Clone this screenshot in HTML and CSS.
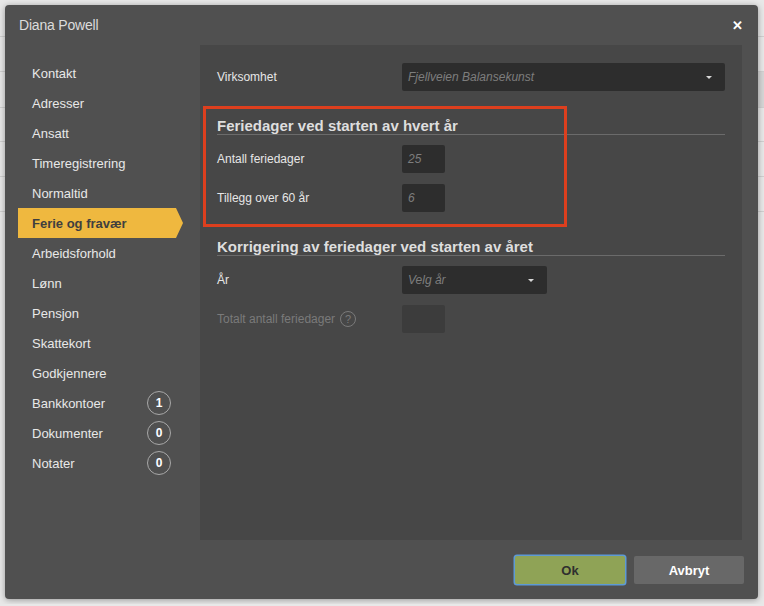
FILE: index.html
```html
<!DOCTYPE html>
<html lang="no">
<head>
  <meta charset="UTF-8" />
  <meta name="viewport" content="width=device-width, initial-scale=1.0"/>
  <title>Diana Powell</title>
  <link rel="stylesheet" href="styles.css">
</head>
<body>

  <div class="dialog">
    <div class="dialog-header">
      <span class="dialog-title">Diana Powell</span>
      <span class="close">&#10005;</span>
    </div>

    <div class="dialog-body">
      <ul class="menu">
        <li>Kontakt</li>
        <li>Adresser</li>
        <li>Ansatt</li>
        <li>Timeregistrering</li>
        <li>Normaltid</li>
        <li class="active">Ferie og fravær</li>
        <li>Arbeidsforhold</li>
        <li>Lønn</li>
        <li>Pensjon</li>
        <li>Skattekort</li>
        <li>Godkjennere</li>
        <li>Bankkontoer <span class="badge">1</span></li>
        <li>Dokumenter <span class="badge">0</span></li>
        <li>Notater <span class="badge">0</span></li>
      </ul>

      <div class="panel">
        <div class="row">
          <label>Virksomhet</label>
          <div class="select wide"><span>Fjellveien Balansekunst</span><i class="caret"></i></div>
        </div>

        <div class="section">
          <div class="highlight"></div>
          <h3>Feriedager ved starten av hvert år</h3>
          <div class="row">
            <label>Antall feriedager</label>
            <div class="field">25</div>
          </div>
          <div class="row">
            <label>Tillegg over 60 år</label>
            <div class="field">6</div>
          </div>
        </div>

        <div class="section">
          <h3>Korrigering av feriedager ved starten av året</h3>
          <div class="row">
            <label>År</label>
            <div class="select narrow"><span>Velg år</span><i class="caret"></i></div>
          </div>
          <div class="row disabled">
            <label>Totalt antall feriedager <span class="help">?</span></label>
            <div class="field"></div>
          </div>
        </div>
      </div>
    </div>

    <div class="dialog-footer">
      <button class="btn btn-ok">Ok</button>
      <button class="btn btn-cancel">Avbryt</button>
    </div>
  </div>

</body>
</html>
```

FILE: styles.css
```css
body {
  margin: 0;
  padding: 5px;
  font-family: "Liberation Sans", Arial, sans-serif;
  background-color: #e8e8e8;
  /* table rows of the page behind the dialog */
  background-image:
    linear-gradient(#d0d0d0, #d0d0d0),
    linear-gradient(#d0d0d0, #d0d0d0),
    linear-gradient(#d0d0d0, #d0d0d0),
    linear-gradient(#d0d0d0, #d0d0d0),
    linear-gradient(#d0d0d0, #d0d0d0),
    linear-gradient(#d0d0d0, #d0d0d0),
    linear-gradient(#d6d6d6, #d6d6d6);
  background-size: 100% 1px, 100% 1px, 100% 1px, 100% 1px, 100% 1px, 100% 1px, 8px 36px;
  background-position: 0 36px, 0 71px, 0 107px, 0 141px, 0 176px, 0 211px, right 0 top 71px;
  background-repeat: no-repeat;
}

.dialog {
  width: 753px;
  height: 594px;
  background: #505050;
  border-radius: 4px;
  box-shadow: 0 1px 6px rgba(0, 0, 0, 0.35);
  display: flex;
  flex-direction: column;
  color: #e6e6e6;
}

.dialog-header {
  height: 40px;
  display: flex;
  align-items: center;
  justify-content: space-between;
  padding: 0 15px 0 14px;
}
.dialog-title {
  font-size: 14px;
  color: #dcdcdc;
  letter-spacing: -0.2px;
}
.close {
  font-size: 13px;
  font-weight: bold;
  color: #fff;
}

.dialog-body {
  flex: 1;
  display: flex;
}

/* left navigation */
.menu {
  width: 195px;
  margin: 0;
  padding: 13px 0 0 13px;
  list-style: none;
  box-sizing: border-box;
}
.menu li {
  height: 30px;
  width: 158px;
  padding-left: 14px;
  box-sizing: border-box;
  display: flex;
  align-items: center;
  justify-content: space-between;
  font-size: 13px;
  color: #e8e8e8;
  position: relative;
}
.menu li.active {
  background: #efb83f;
  color: #3f3f3f;
  font-weight: bold;
}
.menu li.active::after {
  content: "";
  position: absolute;
  right: -7px;
  top: 0;
  border-left: 7px solid #efb83f;
  border-top: 15px solid transparent;
  border-bottom: 15px solid transparent;
}
.badge {
  width: 22px;
  height: 22px;
  border: 1px solid #a8a8a8;
  border-radius: 50%;
  display: flex;
  align-items: center;
  justify-content: center;
  font-size: 12px;
  font-weight: bold;
  color: #fff;
  margin-right: 5px;
}

/* content panel */
.panel {
  width: 542px;
  height: 495px;
  background: #474747;
  padding: 18px 17px 0 17px;
  box-sizing: border-box;
}
.row {
  display: grid;
  grid-template-columns: 185px 1fr;
  align-items: center;
  height: 28px;
  font-size: 12px;
  color: #e6e6e6;
}
.section {
  position: relative;
  margin-top: 26px;
  display: flex;
  flex-direction: column;
  gap: 11px;
}
.section h3 {
  margin: 0 0 -1px 0;
  font-size: 15px;
  line-height: 17px;
  font-weight: bold;
  color: #dedede;
  border-bottom: 1px solid #6b6b6b;
}
.highlight {
  position: absolute;
  left: -14px;
  top: -11px;
  width: 364px;
  height: 121px;
  border: 3px solid #dd3f1e;
  box-sizing: border-box;
}

.select, .field {
  height: 28px;
  background: #2d2d2d;
  border-radius: 2px;
  box-sizing: border-box;
  display: flex;
  align-items: center;
  padding: 0 6px;
  font-style: italic;
  font-size: 12px;
  color: #7d7d7d;
}
.select {
  justify-content: space-between;
  padding-right: 13px;
}
.select.wide { width: 323px; }
.select.narrow { width: 145px; }
.field { width: 43px; }
.caret {
  border-top: 3px solid #d8d8d8;
  border-left: 3px solid transparent;
  border-right: 3px solid transparent;
}

.disabled { color: #7a7a7a; }
.disabled label {
  display: flex;
  align-items: center;
  gap: 5px;
}
.disabled .field { background: #3c3c3c; }
.help {
  width: 14px;
  height: 14px;
  border: 1px solid #7a7a7a;
  border-radius: 50%;
  display: inline-flex;
  align-items: center;
  justify-content: center;
  font-size: 11px;
}

/* buttons */
.dialog-footer {
  height: 59px;
  display: flex;
  justify-content: flex-end;
  align-items: center;
  gap: 9px;
  padding-right: 14px;
  padding-top: 1px;
  box-sizing: border-box;
}
.btn {
  width: 110px;
  height: 28px;
  border: none;
  border-radius: 2px;
  font-family: "Liberation Sans", Arial, sans-serif;
  font-size: 13px;
  font-weight: bold;
}
.btn-ok {
  background: #8fa356;
  color: #2f2f2f;
  box-shadow: 0 0 0 1.5px #5d9ad6;
}
.btn-cancel {
  background: #686868;
  color: #fff;
}
```
